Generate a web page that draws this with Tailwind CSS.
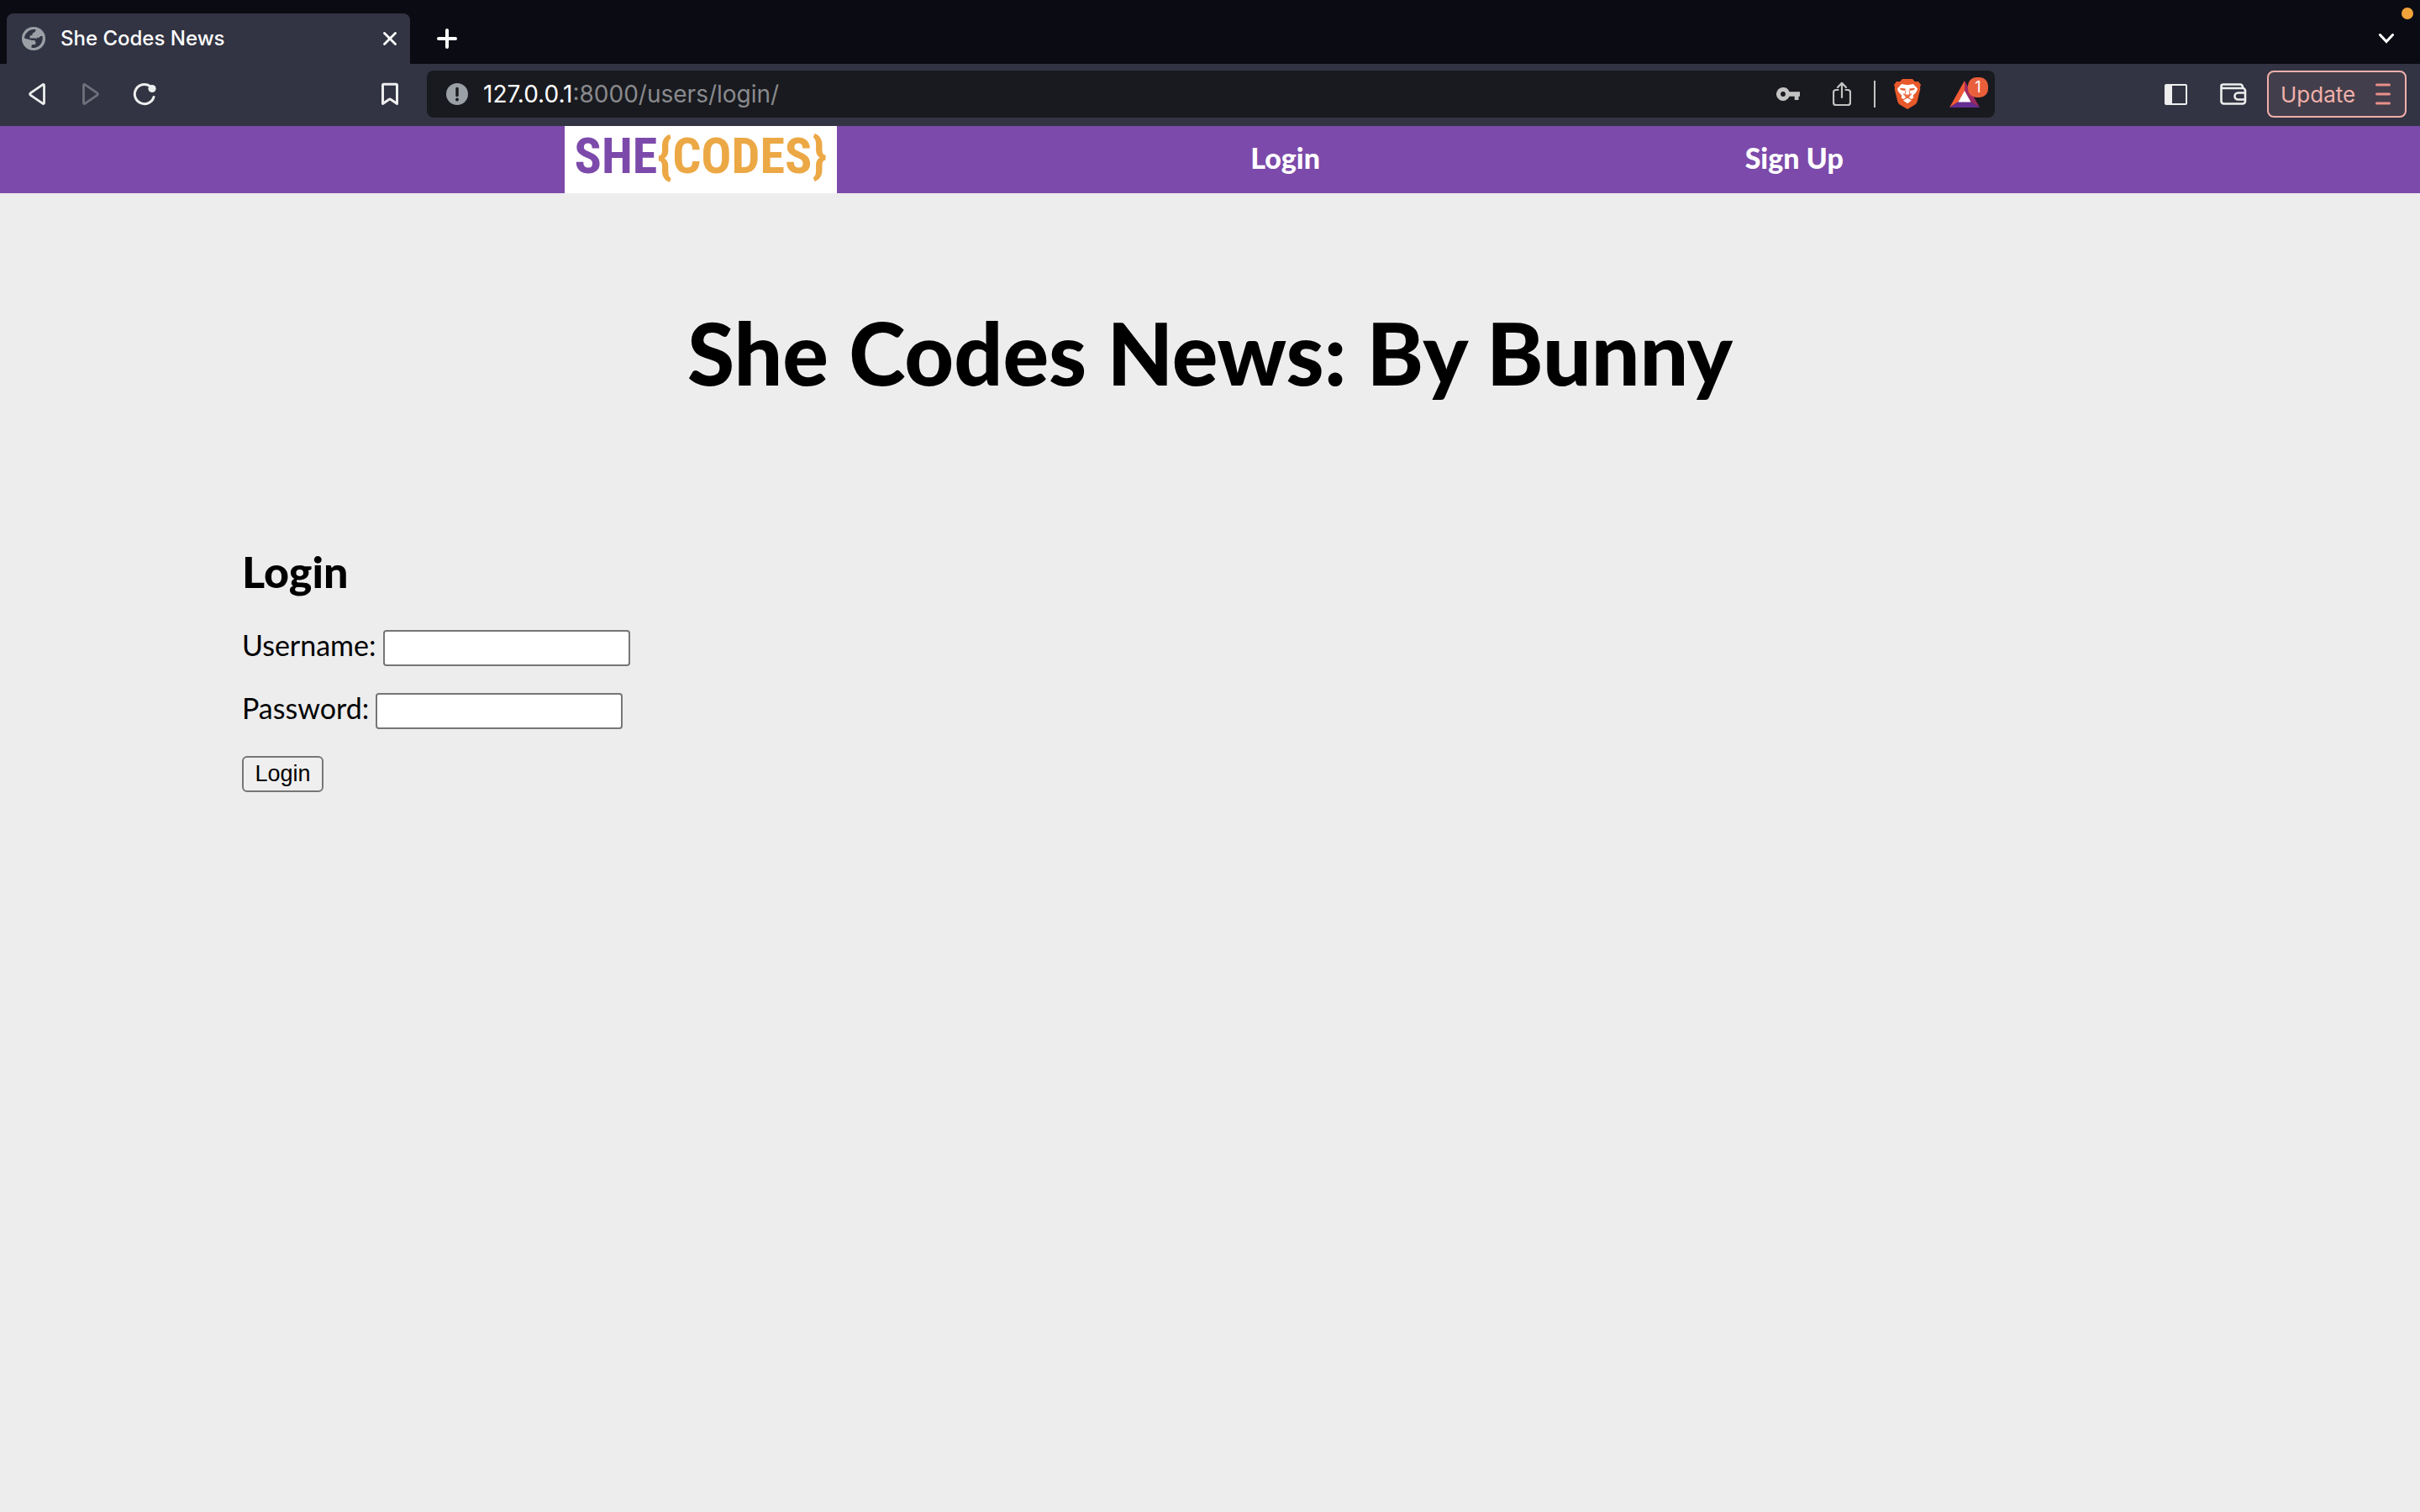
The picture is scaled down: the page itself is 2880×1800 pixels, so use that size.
<!DOCTYPE html>
<html lang="en">
<head>
<meta charset="utf-8">
<title>She Codes News</title>
<script src="https://cdn.jsdelivr.net/npm/@tailwindcss/browser@4"></script>
</head>
<body class="min-h-screen bg-[#ededed] font-['Lato',sans-serif] text-black">
<header class="font-['Inter',sans-serif]">
  <div class="relative flex h-[76px] items-end bg-[#0b0b14] pl-2 pr-[31px]">
    <div class="flex h-[60px] w-[480px] items-center rounded-t-lg bg-[#323443] pl-[18px] pr-4">
      <svg class="size-7" viewBox="0 0 28 28"><circle cx="14" cy="14" r="14" fill="#9aa0a6"/><path d="M3 13.500C3.300 8 8 3.500 14 3h2.500c-.3 2.500-1 4-3.500 4.200 0 2-1 3.300-3.500 3.300v3h6c2 0 3.200 1.300 3.200 3.200v1.300h-3v-2H12M17 11.500c1.500 2.300 4 1.500 5-.500h2.500c1.500 7-3.500 13.500-9.800 14h-3.200v-2c0-1.500 1-2 2.500-2h2l2-8z" fill="#323443"/></svg>
      <span class="ml-[18px] flex-1 text-2xl font-medium text-white">She Codes News</span>
      <button class="size-4" aria-label="Close tab"><svg viewBox="0 0 16 16"><path d="M1.500 1.500l13 13M14.500 1.500l-13 13" stroke="#fff" stroke-width="2.800" stroke-linecap="round"/></svg></button>
    </div>
    <button class="mb-[18px] ml-8 size-6" aria-label="New tab"><svg viewBox="0 0 24 24"><path d="M12 2v20M2 12h20" stroke="#fff" stroke-width="4" stroke-linecap="round"/></svg></button>
    <button class="mb-6 ml-auto h-3 w-[18px]" aria-label="Search tabs"><svg viewBox="0 0 18 12"><path d="M1.500 1.500L9 9.500l7.500-8" fill="none" stroke="#fff" stroke-width="3" stroke-linecap="round"/></svg></button>
    <span class="absolute right-2 top-[9px] size-3.5 rounded-full bg-[#f2a33a]"></span>
  </div>
  <div class="flex h-[74px] items-center bg-[#323443] pb-2.5 pl-[34px] pr-4 pt-2">
    <button aria-label="Back"><svg class="h-7 w-5" viewBox="0 0 20 28"><path d="M18.500 3.500v21c0 1-1 1.300-1.800.6L2.500 15.400c-1.200-.9-1.200-1.900 0-2.800L16.700 2.900c.8-.7 1.800-.4 1.800.6z" fill="none" stroke="#eee" stroke-width="2.800" stroke-linejoin="round"/></svg></button>
    <button class="ml-11" aria-label="Forward" disabled><svg class="h-7 w-5" viewBox="0 0 20 28"><path d="M1.500 3.500v21c0 1 1 1.300 1.800.6l14.200-9.700c1.200-.9 1.200-1.900 0-2.800L3.300 2.900c-.8-.7-1.800-.4-1.800.6z" fill="none" stroke="#6f707b" stroke-width="2.800" stroke-linejoin="round"/></svg></button>
    <button class="ml-10" aria-label="Reload"><svg class="size-7" viewBox="0 0 28 28"><path d="M20.500 4.500A11.600 11.600 0 1 0 25 17.500" fill="none" stroke="#eee" stroke-width="3" stroke-linecap="round"/><circle cx="23" cy="7.500" r="4.600" fill="#eee"/></svg></button>
    <button class="ml-[268px]" aria-label="Bookmark"><svg class="h-7 w-5" viewBox="0 0 20 28"><path d="M1.500 3.500c0-.8.500-1.200 1.200-1.200h14.600c.7 0 1.200.4 1.200 1.200v22L11.200 20.600c-.8-.6-1.600-.6-2.400 0L1.500 25.500z" fill="none" stroke="#eee" stroke-width="3" stroke-linejoin="round"/></svg></button>
    <div class="ml-[34px] flex h-14 min-w-0 flex-1 items-center rounded-lg bg-[#191a1f] pl-[23px] pr-2">
      <svg class="size-[26px]" viewBox="0 0 26 26"><circle cx="13" cy="13" r="13" fill="#9aa0a6"/><path d="M13 6.500v8" stroke="#191a1f" stroke-width="3.400" stroke-linecap="round"/><circle cx="13" cy="19.500" r="1.900" fill="#191a1f"/></svg>
      <p class="ml-[18px] flex-1 text-[28px] text-[#898a8e]"><span class="text-white">127.0.0.1</span>:8000/users/login/</p>
      <button aria-label="Passwords"><svg class="h-4 w-7" viewBox="0 0 28 16"><path fill-rule="evenodd" d="M8 0a8 8 0 0 1 7.500 5.300H28v5.400h-1.500V15h-4.800v-4.300h-6.200A8 8 0 1 1 8 0zm0 5.100a2.900 2.900 0 1 0 0 5.800 2.900 2.900 0 0 0 0-5.800z" fill="#c3c3c3"/></svg></button>
      <button class="ml-[39px]" aria-label="Share"><svg class="h-[30px] w-[22px]" viewBox="0 0 22 30"><path d="M6.500 10H4a3 3 0 0 0-3 3v12a3 3 0 0 0 3 3h14a3 3 0 0 0 3-3V13a3 3 0 0 0-3-3h-2.500M11 19V2M6 7l5-5.200L16 7" fill="none" stroke="#c3c3c3" stroke-width="2.200" stroke-linecap="round" stroke-linejoin="round"/></svg></button>
      <span class="ml-[27px] h-8 w-0.5 bg-[#c3c3c3]"></span>
      <button class="ml-[22px]" aria-label="Brave Shields"><svg class="h-9 w-8" viewBox="0 0 32 36"><path d="M10 0h12l3 3.300 4-.3 3 4-1 3 .3 2-3.500 14.500c-.5 2-1.500 3.200-3 4.200L16 36l-8.800-5.300c-1.500-1-2.500-2.200-3-4.200L.7 12l.3-2-1-3 3-4 4 .3z" fill="#e8592b"/><path d="M9 6l7 1.200L23 6l5 5.500-1 3.500-4.500 5 1 2.500-3 1.500-3.500-2.500h-2L11.500 24l-3-1.500 1-2.500L5 15l-1-3.500zM11 25.500l5-3 5 3-5 3.700z" fill="#fff"/><path d="M7.500 11l6 .8-.8 1.900-4.700-1zM24.500 11l-6 .8.800 1.900 4.700-1zM14 13.500l-.8 4 1.800 1.500h2l1.800-1.500-.8-4 1 4.500-2.300 2h-1.400l-2.300-2zM11 17.500l5 3.500 5-3.500-3.500 4.500h-3z" fill="#e8592b" stroke="#e8592b" stroke-width=".5"/></svg></button>
      <button class="relative ml-[34px] flex h-14 w-[46px] items-center" aria-label="Brave Rewards, 1 new"><svg class="h-8 w-9" viewBox="0 0 36 32"><path d="M18 0v12.500L11 25 0 32z" fill="#f05a35"/><path d="M18 0l18 32-11-7-7-12.500z" fill="#9e2a63"/><path d="M0 32l11-7h14l11 7z" fill="#652d91"/><path d="M18 12l7.500 13.500h-15z" fill="#fff"/></svg><span class="absolute right-0 top-2 flex size-6 items-center justify-center rounded-[10px] bg-[#e95f3c] text-lg leading-none text-white">1</span></button>
    </div>
    <button class="ml-[202px]" aria-label="Sidebar"><svg class="h-7 w-[27px]" viewBox="0 0 27 28"><rect x="1" y="3" width="25" height="23" rx="1" fill="none" stroke="#eee" stroke-width="2"/><path d="M1 3h8v23H1z" fill="#eee"/></svg></button>
    <button class="ml-[39px]" aria-label="Wallet"><svg class="h-7 w-8" viewBox="0 0 32 28"><path d="M1.500 5v17.500a3 3 0 0 0 3 3H27a3 3 0 0 0 3-3V10a3 3 0 0 0-3-3H4.500a2.500 2.500 0 0 1-3-2.500c0-1 1-2 2.500-2h20a3 3 0 0 1 3 3V7M30 12.500h-8.500a4 4 0 0 0 0 8H30" fill="none" stroke="#eee" stroke-width="2.600"/></svg></button>
    <button class="ml-6 flex h-14 w-[166px] items-center justify-between rounded-lg border-2 border-[#f0b0aa] bg-[#433e4b] pl-3.5 pr-[17px] text-[26px] text-[#f0b0aa]">Update<svg class="h-[26px] w-[18px]" viewBox="0 0 18 26"><path d="M1.500 2h15M1.500 13h15M1.500 24h15" stroke="#e8908a" stroke-width="3" stroke-linecap="round"/></svg></button>
  </div>
</header>
<nav class="flex h-20 items-center bg-[#7c4aaa] pl-[23.33%] text-[34px] font-black text-white">
  <a href="/" class="flex h-20 w-[324px] items-center justify-center bg-white pb-2 font-['Roboto_Condensed','Roboto',sans-serif] text-[60px] font-bold leading-none text-[#7c4aaa]"><span>SHE</span><span class="text-[#eca845]">{CODES}</span></a>
  <a href="/users/login/" class="ml-[22.3%] pb-1.5">Login</a>
  <a href="/users/create-account/" class="ml-[22.9%] pb-1.5">Sign Up</a>
</nav>
<main class="px-[10%]">
  <h1 class="pt-[126px] text-center text-[102px] font-black leading-[128px]">She Codes News: By Bunny</h1>
  <h2 class="mt-[166px] text-[52px] font-black leading-[60px]">Login</h2>
  <form class="mt-10 flex flex-col items-start gap-8 text-[34px]">
    <div class="flex h-[43px] items-center gap-2"><label for="user" class="pb-2">Username:</label><input id="user" type="text" class="h-[43px] w-[294px] rounded-[4px] border-2 border-[#767676] bg-white px-1"></div>
    <div class="flex h-[43px] items-center gap-2"><label for="pass" class="pb-2">Password:</label><input id="pass" type="password" class="h-[43px] w-[294px] rounded-[4px] border-2 border-[#767676] bg-white px-1"></div>
    <button class="h-[43px] w-[97px] rounded-md border-2 border-[#767676] bg-[#efefef] font-['Liberation_Sans',sans-serif] text-[27px] leading-none">Login</button>
  </form>
</main>
</body>
</html>
